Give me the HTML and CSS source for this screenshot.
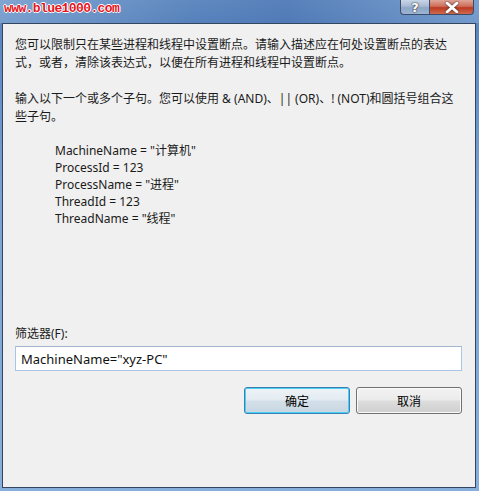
FILE: index.html
```html
<!DOCTYPE html>
<html lang="zh">
<head>
<meta charset="utf-8">
<link rel="stylesheet" href="styles.css">
</head>
<body>
<div class="window">
  <div class="titlebar">
    <span class="watermark">www.blue1000.com</span>
    <div class="caption-btns">
      <div class="cbtn help">?</div>
      <div class="cbtn close">
        <svg width="14" height="11" viewBox="0 0 14 11"><path d="M2 1 L12 10 M12 1 L2 10" stroke="#fff" stroke-width="2.6" stroke-linecap="round"/><path d="M2 1 L12 10 M12 1 L2 10" stroke="#fff" stroke-width="2" /></svg>
      </div>
    </div>
  </div>
  <div class="client">
    <p class="para">您可以限制只在某些进程和线程中设置断点。请输入描述应在何处设置断点的表达式，或者，清除该表达式，以便在所有进程和线程中设置断点。</p>
    <p class="para">输入以下一个或多个子句。您可以使用 &amp; (AND)、|| (OR)、! (NOT)和圆括号组合这些子句。</p>
    <div class="clauses">
      <div>MachineName = "计算机"</div>
      <div>ProcessId = 123</div>
      <div>ProcessName = "进程"</div>
      <div>ThreadId = 123</div>
      <div>ThreadName = "线程"</div>
    </div>
    <div class="spacer"></div>
    <label class="flabel">筛选器(F):</label>
    <div class="input">MachineName="xyz-PC"</div>
    <div class="buttons">
      <div class="btn default">确定</div>
      <div class="btn">取消</div>
    </div>
  </div>
</div>
</body>
</html>
```

FILE: styles.css
```css
* { box-sizing: border-box; }
html, body { margin: 0; padding: 0; }
body {
  width: 479px;
  height: 491px;
  overflow: hidden;
  font-family: "Noto Sans", "Noto Sans CJK SC", sans-serif;
  font-size: 12px;
  color: #1a1a1a;
}
.window {
  width: 479px;
  height: 491px;
  background: linear-gradient(180deg, #6b95c9 0%, #5a86c0 6%, #7aa3d3 40%, #88aedb 100%);
  padding: 0 3px 3px 1px;
  display: flex;
  flex-direction: column;
}
.titlebar {
  height: 23px;
  position: relative;
  background: linear-gradient(90deg, rgba(160,190,225,0.4) 0%, rgba(70,110,170,0.3) 40%, rgba(60,100,165,0.4) 60%, rgba(160,190,225,0.3) 100%);
  margin: 0 -3px 0 -1px;
}
.watermark {
  position: absolute;
  left: 4px;
  top: 1px;
  font-family: "Liberation Mono", monospace;
  font-size: 13px;
  font-weight: bold;
  color: #e8141c;
  letter-spacing: -0.6px;
  text-shadow: 1px 0 #fff, -1px 0 #fff, 0 1px #fff, 0 -1px #fff;
}
.caption-btns {
  position: absolute;
  right: 5px;
  top: 0;
  display: flex;
  height: 15px;
}
.cbtn {
  height: 15px;
  border: 1px solid #3b4d6b;
  border-top: none;
  display: flex;
  align-items: center;
  justify-content: center;
}
.help {
  width: 29px;
  border-radius: 0 0 0 4px;
  background: linear-gradient(180deg, #c9d6e8 0%, #a7b9d2 45%, #8ea6c6 55%, #9db5d4 100%);
  color: #fff;
  font-weight: bold;
  font-size: 13px;
  font-family: "DejaVu Sans", sans-serif;
  text-shadow: 0 0 2px #333, 0 0 1px #222;
  border-right: none;
}
.close {
  width: 45px;
  border-radius: 0 0 4px 0;
  background: linear-gradient(180deg, #e0a597 0%, #cf6e5b 45%, #bb3a22 55%, #d06a4e 100%);
}
.close svg { filter: drop-shadow(0 0 1px #333); }
.client {
  flex: 1;
  background: #f0f0f0;
  border: 1px solid #34465f;
  margin-left: 1px;
  display: flex;
  flex-direction: column;
  padding: 12px 14px 0 12px;
}
.para {
  margin: 0 0 18px 0;
  line-height: 18px;
  width: 443px;
}
.clauses {
  padding-left: 40px;
  line-height: 17px;
  margin-top: -2px;
}
.spacer { flex: 0 0 99px; }
.flabel { line-height: 16px; }
.input {
  margin-top: 4px;
  height: 25px;
  width: 447px;
  background: #fff;
  border: 1px solid #a9c4e4;
  border-top-color: #a3b8d0;
  padding: 3px 0 0 5px;
  font-size: 13px;
  color: #111;
}
.buttons {
  display: flex;
  justify-content: flex-end;
  gap: 6px;
  margin-top: 16px;
  width: 447px;
}
.btn {
  width: 106px;
  height: 27px;
  border: 1px solid #707070;
  border-radius: 3px;
  background: linear-gradient(180deg, #f2f2f2 0%, #ebebeb 48%, #dddddd 52%, #cfcfcf 100%);
  display: flex;
  align-items: center;
  justify-content: center;
  box-shadow: inset 0 0 0 1px #fbfbfb;
  color: #000;
}
.btn.default {
  border-color: #3c7fb1;
  box-shadow: inset 0 0 0 1px #48d0f6;
  background: linear-gradient(180deg, #eef3f7 0%, #e3ebf1 48%, #d3dfe8 52%, #c8d7e2 100%);
}
```
